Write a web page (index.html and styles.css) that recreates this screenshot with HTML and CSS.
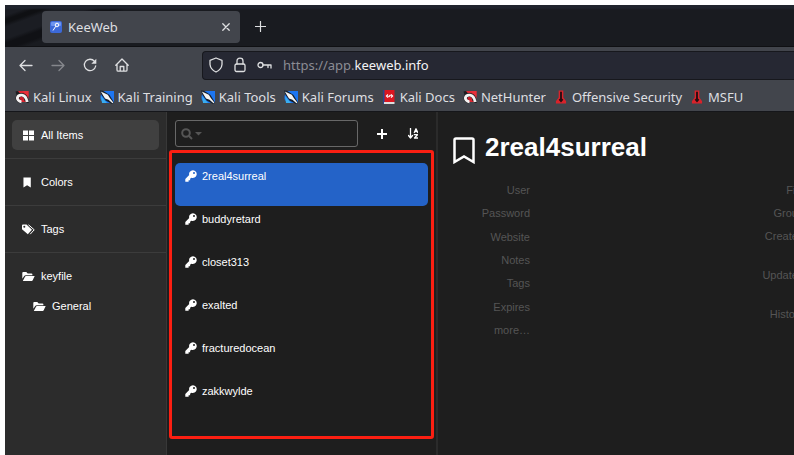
FILE: index.html
```
<!DOCTYPE html>
<html lang="en">
<head>
<meta charset="utf-8">
<title>KeeWeb</title>
<link rel="stylesheet" href="styles.css">
</head>
<body>
<svg class="defs" aria-hidden="true">
  <symbol id="key" viewBox="0 0 12 12"><path fill="currentColor" fill-rule="evenodd" d="M8 .2a3.900 3.900 0 0 0-3.800 4.900L.3 9V11.700h3.300v-1.400h1.500V8.800L6.300 7.700A3.900 3.900 0 1 0 8 .2zM9 2a1 1 0 1 1 0 2 1 1 0 0 1 0-2z"/></symbol>
  <symbol id="folder" viewBox="0 0 13 10"><path fill="currentColor" d="M.3 7.300V1.500Q.3.600 1.200.600H4.300L5.700 2H9.500Q10.400 2 10.400 2.900V3.800H3.700Q2.700 3.800 2.200 4.600zM.8 9.400 3 5.200Q3.300 4.600 4 4.600H12.700L10.700 8.800Q10.400 9.400 9.700 9.400z"/></symbol>
  <symbol id="dragon" viewBox="0 0 14 14"><path fill="#dc2530" d="M2 1H13.500V8L11 12 5 12z"/><path fill="#1c1d21" d="M.5 1.500 3 1 5 3.500 1.500 5zM10.500 7 14 13H11z"/><path fill="none" stroke="#1c1d21" stroke-width="4" d="M11.500 11Q11 5.500 7 5Q3 4.500 2.500 8Q3 11 6 11.500"/><path fill="none" stroke="#f5f2f2" stroke-width="2.800" d="M12.200 12Q11 5.800 7 5.200Q3 4.700 2.300 8Q2.500 11 6.500 11.800"/><path fill="#e8303a" d="M7 1H13.500V6.500z"/><circle cx="6.500" cy="8.500" r="1.800" fill="#c91f2b"/></symbol>
  <symbol id="knife" viewBox="0 0 14 14"><path fill="#1d76f2" d="M3 1H14V13H3L.5 9V6z"/><path fill="#39adf0" d="M1 6 7 13H2z"/><path fill="#17202c" d="M0 .5 3 .8 9.500 5 14 12.500 12 14 5.500 10.500 1.500 5z"/><path fill="#f4f4f4" d="M.8 1.500 7.800 4.800 9.800 8 13.300 12.500 12.500 13.200 8.500 9.800 5 8.500z"/></symbol>
  <symbol id="boot" viewBox="0 0 12 15"><path fill="#d9222a" d="M3.500.5H8.500V8L11.500 12V14.500H.5V12L3.500 8z"/><path fill="#260c10" d="M5 2H7V9L8.500 10.500 6 13.500 3.500 10.500 5 9z"/></symbol>
</svg>

<div class="browser">
  <header class="tabs">
    <div class="tab">
      <svg class="favicon" viewBox="0 0 12 12" aria-hidden="true"><rect width="12" height="12" rx="2" fill="#3c69d8"/><rect x="1" y="1" width="10" height="4" rx="1" fill="#6d94ee"/><circle cx="7" cy="4" r="1.800" fill="none" stroke="#fff"/><path d="M5.800 5.200 3 9.500" stroke="#fff"/></svg>
      <span class="tab-title">KeeWeb</span>
      <button class="icon-button tab-close" aria-label="Close tab"><svg viewBox="0 0 8 8"><path d="M.8.800 7.200 7.200M7.200.800.8 7.200"/></svg></button>
    </div>
    <button class="icon-button new-tab" aria-label="New tab"><svg viewBox="0 0 12 12"><path d="M6 .5V11.500M.5 6H11.500"/></svg></button>
  </header>

  <nav class="toolbar" aria-label="Navigation">
    <div class="nav-buttons">
      <button class="icon-button" aria-label="Back"><svg viewBox="0 0 14 14"><path d="M13 7.500H1M6 2.500 1 7.500 6 12.500"/></svg></button>
      <button class="icon-button dim" aria-label="Forward"><svg viewBox="0 0 14 14"><path d="M1 7.500H13M8 2.500 13 7.500 8 12.500"/></svg></button>
      <button class="icon-button" aria-label="Reload"><svg viewBox="0 0 14 14"><path d="M11.500 3.300A5.700 5.700 0 1 0 12.700 8"/><path class="solid" d="M13.300.8V5.800H8.300z"/></svg></button>
      <button class="icon-button" aria-label="Home"><svg viewBox="0 0 14 14"><path d="M.8 7.200 7 1 13.200 7.200M2 6.500V12Q2 13.200 3.200 13.200H10.800Q12 13.200 12 12V6.500M5.200 13V8.500H8.800V13"/></svg></button>
    </div>
    <div class="address">
      <svg class="shield" viewBox="0 0 14 16" aria-hidden="true"><path d="M7 1 13 3.400V7.500Q12.500 12.500 7 15Q1.500 12.500 1 7.500V3.400z"/></svg>
      <svg class="lock" viewBox="0 0 12 16" aria-hidden="true"><rect x="1" y="7" width="10" height="7.500" rx="1.500"/><path d="M3 7V4Q3 1.200 6 1.200T9 4V7"/></svg>
      <svg class="perm" viewBox="0 0 15 8" aria-hidden="true"><circle cx="3.500" cy="4" r="2.500"/><path d="M6 4H14V7M11 4V6.500"/></svg>
      <div class="url" role="textbox" aria-label="Address"><span>https://app.</span>keeweb.info</div>
    </div>
  </nav>

  <nav class="bookmarks" aria-label="Bookmarks">
    <a href="#"><svg viewBox="0 0 14 14"><use href="#dragon"/></svg>Kali Linux</a>
    <a href="#"><svg viewBox="0 0 14 14"><use href="#knife"/></svg>Kali Training</a>
    <a href="#"><svg viewBox="0 0 14 14"><use href="#knife"/></svg>Kali Tools</a>
    <a href="#"><svg viewBox="0 0 14 14"><use href="#knife"/></svg>Kali Forums</a>
    <a href="#"><svg viewBox="0 0 14 14"><path fill="#29458f" d="M1 0H3V14H1z"/><path fill="#dc1620" d="M2.500 0H12.500V12H2.500z"/><path fill="#ddd" d="M2 12H12.500V14H2z"/><path fill="none" stroke="#fff" stroke-width="1.200" d="M6 4.500 4.500 6 6 7.500M6.500 7 8.500 5M9 4.500 10.500 6 9 7.500"/></svg>Kali Docs</a>
    <a href="#"><svg viewBox="0 0 14 14"><use href="#dragon"/></svg>NetHunter</a>
    <a href="#"><svg viewBox="0 0 12 15"><use href="#boot"/></svg>Offensive Security</a>
    <a href="#"><svg viewBox="0 0 12 15"><use href="#boot"/></svg>MSFU</a>
  </nav>

  <div class="app">
    <aside class="sidebar">
      <div class="group"><a class="menu-item active" href="#"><svg viewBox="0 0 13 10"><path fill="currentColor" d="M1 0H6V4.500H1zM7 0H12V4.500H7zM1 5.500H6V10H1zM7 5.500H12V10H7z"/></svg>All Items</a></div>
      <div class="group"><a class="menu-item" href="#"><svg viewBox="0 0 13 12"><path fill="currentColor" d="M1 .5H9V11.500L5 9 1 11.500z"/></svg>Colors</a></div>
      <div class="group"><a class="menu-item" href="#"><svg viewBox="0 0 13 10"><path fill="currentColor" fill-rule="evenodd" d="M0 1Q0 0 1 0H4.500L10 5.200 5.800 9.800 0 4.800zM2.300 1.300a1 1 0 1 0 0 2 1 1 0 0 0 0-2z"/><path fill="none" stroke="currentColor" d="M6.500.3 12.200 5.300 8.200 9.700"/></svg>Tags</a></div>
      <div class="group">
        <a class="menu-item" href="#"><svg viewBox="0 0 13 10"><use href="#folder"/></svg>keyfile</a>
        <a class="menu-item child" href="#"><svg viewBox="0 0 13 10"><use href="#folder"/></svg>General</a>
      </div>
    </aside>

    <section class="entries" aria-label="Entries">
      <div class="search-row">
        <label class="search">
          <svg viewBox="0 0 22 12" aria-hidden="true"><circle cx="5" cy="5" r="3.800" fill="none" stroke="currentColor" stroke-width="2"/><path stroke="currentColor" stroke-width="2" d="M8 8 11 11"/><path fill="currentColor" d="M14 4H21L17.500 7.500z"/></svg>
          <input type="search" aria-label="Search">
        </label>
        <button class="icon-button add" aria-label="Add entry"><svg viewBox="0 0 10 10"><path d="M5 0V10M0 5H10"/></svg></button>
        <button class="icon-button sort" aria-label="Sort entries"><svg viewBox="0 0 10 11"><path d="M2.500 0V10M.5 7.500 2.500 10 4.500 7.500M6.300 4.500 8 .8 9.700 4.500M7 3.500H9M6.300 6.700H9.500L6.500 10H9.800"/></svg></button>
      </div>
      <ul class="entry-list">
        <li><a class="selected" href="#"><svg viewBox="0 0 12 12"><use href="#key"/></svg>2real4surreal</a></li>
        <li><a href="#"><svg viewBox="0 0 12 12"><use href="#key"/></svg>buddyretard</a></li>
        <li><a href="#"><svg viewBox="0 0 12 12"><use href="#key"/></svg>closet313</a></li>
        <li><a href="#"><svg viewBox="0 0 12 12"><use href="#key"/></svg>exalted</a></li>
        <li><a href="#"><svg viewBox="0 0 12 12"><use href="#key"/></svg>fracturedocean</a></li>
        <li><a href="#"><svg viewBox="0 0 12 12"><use href="#key"/></svg>zakkwylde</a></li>
      </ul>
    </section>

    <main class="details">
      <div class="details-head">
        <svg viewBox="0 0 22 27" aria-hidden="true"><path d="M1.500 3Q1.500 1.500 3 1.500H19Q20.500 1.500 20.500 3V25L11 19.500 1.500 25z"/></svg>
        <h1>2real4surreal</h1>
      </div>
      <div class="details-body">
        <ul class="fields">
          <li>User</li><li>Password</li><li>Website</li><li>Notes</li><li>Tags</li><li>Expires</li><li>more…</li>
        </ul>
        <ul class="fields meta">
          <li>File</li><li>Group</li><li>Created</li><li class="tall">Updated</li><li class="tall">History</li>
        </ul>
      </div>
    </main>
  </div>
</div>
</body>
</html>
```
FILE: styles.css
```
* { box-sizing: border-box; }

body {
  margin: 0;
  padding: 5px 0 0 5px;
  background: #fff;
  font-family: "Noto Sans", sans-serif;
}

ul { list-style: none; margin: 0; padding: 0; }
a { color: inherit; text-decoration: none; }
svg { flex: none; }
.defs { position: absolute; width: 0; height: 0; }

.browser {
  display: flex;
  flex-direction: column;
  height: calc(100vh - 5px);
  overflow: hidden;
  background: #42454c;
  color: #dedfe1;
}

.icon-button {
  display: flex;
  padding: 0;
  border: 0;
  background: none;
  color: inherit;
}
.icon-button svg, .address svg {
  fill: none;
  stroke: currentColor;
  stroke-width: 1.3;
  stroke-linecap: round;
  stroke-linejoin: round;
}
.icon-button .solid { fill: currentColor; stroke: none; }

.tabs {
  display: flex;
  flex: none;
  align-items: center;
  gap: 15px;
  height: 42px;
  padding: 3px 0 1px 37px;
  background:
    linear-gradient(#20242d 0 3px, transparent 5px),
    linear-gradient(160deg, #1b1d23 10px, #0f1013 14px 17px, #1b1d23 21px 32px, #101115 36px 42px, #191b20 46px);
  border-bottom: 1px solid #0f1013;
}
.tab {
  display: flex;
  align-items: center;
  gap: 6px;
  width: 198px;
  height: 32px;
  padding: 0 10px 0 8px;
  border-radius: 4px;
  background: #42454c;
  font-size: 13px;
}
.tab-title { flex: 1; }
.favicon { width: 12px; height: 12px; }
.tab-close svg { width: 8px; height: 8px; }
.new-tab svg { width: 11px; height: 11px; }

.toolbar {
  display: flex;
  flex: none;
  align-items: center;
  height: 36px;
  padding-left: 14px;
}
.nav-buttons { display: flex; flex: none; gap: 18px; width: 183px; }
.nav-buttons svg { width: 14px; height: 14px; }
.dim { color: #85878c; }
.address {
  display: flex;
  flex: 1;
  align-items: center;
  gap: 11px;
  height: 29px;
  padding-left: 6px;
  border: 1px solid #17181d;
  border-right: 0;
  border-radius: 4px 0 0 4px;
  background: #262833;
}
.shield { width: 14px; height: 16px; }
.lock { width: 12px; height: 16px; }
.perm { width: 15px; height: 8px; }
.url { font-size: 13px; color: #f3f3f5; }
.url span { color: #8b8c93; }

.bookmarks {
  display: flex;
  flex: none;
  gap: 8px;
  height: 29px;
  padding-left: 10px;
  border-bottom: 1px solid #15161a;
  font-size: 13px;
  white-space: nowrap;
}
.bookmarks a { display: flex; align-items: center; gap: 4px; }
.bookmarks svg { width: 14px; height: 14px; }

.app {
  display: flex;
  flex: 1;
  min-height: 0;
  background: #1e1e1e;
  color: #fff;
  font-family: "Liberation Sans", Arial, sans-serif;
  font-size: 11px;
}

.sidebar {
  flex: none;
  width: 162px;
  background: #2c2c2c;
  border-right: 1px solid #383838;
}
.group {
  padding: 8px 7px;
  border-bottom: 1px solid #3c3c3c;
}
.group:last-child { border-bottom: 0; }
.menu-item {
  display: flex;
  align-items: center;
  gap: 6px;
  height: 30px;
  padding-left: 10px;
  border-radius: 5px;
}
.menu-item svg { width: 13px; height: 11px; }
.active { background: #404040; }
.child { padding-left: 21px; }

.entries {
  display: flex;
  flex: none;
  flex-direction: column;
  width: 271px;
  padding: 8px 2px 0 2px;
  border-right: 2px solid #2b2b2b;
}
.search-row { display: flex; align-items: center; padding: 0 16px 0 6px; }
.search {
  display: flex;
  flex: 1;
  align-items: center;
  height: 27px;
  padding-left: 5px;
  border: 1px solid #686868;
  border-radius: 3px;
  color: #555;
}
.search svg { width: 22px; height: 12px; }
.search input {
  flex: 1;
  min-width: 0;
  border: 0;
  outline: 0;
  background: none;
  color: #fff;
  font: inherit;
}
.add { margin: 0 21px 0 19px; }
.add svg { width: 10px; height: 10px; stroke-width: 2; stroke-linecap: butt; }
.sort svg { width: 10px; height: 11px; }

.entry-list {
  height: 289px;
  margin-top: 3px;
  padding: 10px 3px;
  border: 3px solid #fb1f12;
  border-radius: 3px;
}
.entry-list a {
  display: flex;
  align-items: flex-start;
  gap: 5px;
  height: 43px;
  padding: 7px 10px;
  border-radius: 5px;
  line-height: 13px;
}
.entry-list svg { width: 12px; height: 12px; }
.selected { background: #2463c8; }

.details { flex: 1; min-width: 0; overflow: hidden; padding: 19px 0 0 15px; }
.details-head { display: flex; align-items: center; gap: 10px; }
.details-head svg {
  width: 22px;
  height: 27px;
  margin-top: 6px;
  fill: none;
  stroke: #fff;
  stroke-width: 2.5;
}
h1 { margin: 0; font-size: 26px; line-height: 33px; }
.details-body {
  display: flex;
  justify-content: space-between;
  margin: 18px -10px 0 0;
  color: #555;
  line-height: 16px;
  text-align: right;
}
.fields { display: flex; flex-direction: column; justify-content: space-between; width: 77px; height: 156px; }
.meta { justify-content: flex-start; gap: 7px; width: 60px; }
.tall { padding-top: 16px; }
```
